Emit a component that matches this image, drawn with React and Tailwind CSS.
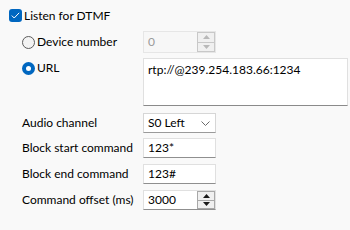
const Radio = ({ checked }) =>
    checked ? (
        <span className="w-[13px] h-[13px] rounded-full bg-[#0067c0] flex items-center justify-center shrink-0">
            <span className="w-[5px] h-[5px] rounded-full bg-white"></span>
        </span>
    ) : (
        <span className="w-[13px] h-[13px] rounded-full border border-[#5c5c5c] bg-[#f3f3f3] shrink-0"></span>
    );

const SpinButtons = ({ disabled }) => {
    const arrow = disabled ? '#b8b8b8' : '#1a1a1a';
    const border = disabled ? 'border-[#c8c8c8]' : 'border-[#a8a8a8]';
    return (
        <div className={`w-[18px] h-full flex flex-col border ${border} bg-[#f0f0f0]`}>
            <div className={`flex-1 flex items-center justify-center border-b ${border}`}>
                <svg width="7" height="4" viewBox="0 0 7 4"><path d="M3.5 0 L7 4 L0 4 Z" fill={arrow} /></svg>
            </div>
            <div className="flex-1 flex items-center justify-center">
                <svg width="7" height="4" viewBox="0 0 7 4"><path d="M0 0 L7 0 L3.5 4 Z" fill={arrow} /></svg>
            </div>
        </div>
    );
};

const Field = ({ children }) => (
    <div className="w-[73px] h-[20px] bg-white border border-[#e0e0e0] border-b-[#8f8f8f] flex items-center pl-[4px]">
        {children}
    </div>
);

const Label = ({ children }) => (
    <div className="w-[134px] shrink-0 pl-[13px] whitespace-nowrap">{children}</div>
);

export default function App() {
    return (
        <div
            className="w-[350px] h-[230px] bg-[#f9f9f9] text-[12px] leading-none text-black overflow-hidden pt-[9px] pl-[9px] whitespace-nowrap"
            style={{ fontFamily: '"Segoe UI", Lato, sans-serif' }}
        >
            {/* checkbox header */}
            <div className="flex items-center h-[13px] gap-[2px]">
                <span className="w-[13px] h-[13px] rounded-[3px] bg-[#0067c0] flex items-center justify-center">
                    <svg width="9" height="7" viewBox="0 0 9 7">
                        <path d="M0.8 3.6 L3.2 6 L8.2 0.8" fill="none" stroke="white" strokeWidth="1" />
                    </svg>
                </span>
                <span>Listen for DTMF</span>
            </div>

            <div className="pl-[13px] flex flex-col">
                {/* device number */}
                <div className="flex items-center h-[22px] mt-[9px]">
                    <div className="w-[121px] flex items-center gap-[2px]">
                        <Radio />
                        <span>Device number</span>
                    </div>
                    <div className="w-[73px] h-[22px] flex bg-[#f7f7f7] border border-[#e6e6e6]">
                        <div className="flex-1 flex items-center pl-[4px] text-[#9a9a9a]">0</div>
                        <SpinButtons disabled />
                    </div>
                </div>

                {/* url */}
                <div className="flex items-start mt-[5px]">
                    <div className="w-[121px] h-[20px] flex items-center gap-[2px]">
                        <Radio checked />
                        <span>URL</span>
                    </div>
                    <div className="w-[205px] h-[48px] bg-white border border-[#e0e0e0] border-b-[#8a8a8a] pl-[4px] pt-[5px]">
                        rtp://@239.254.183.66:1234
                    </div>
                </div>
            </div>

            <div className="flex flex-col">
                <div className="flex items-center h-[20px] mt-[7px]">
                    <Label>Audio channel</Label>
                    <div className="w-[73px] h-[20px] bg-white border border-[#d6d6d6] border-b-[#9a9a9a] flex items-center justify-between pl-[4px] pr-[5px]">
                        <span>S0 Left</span>
                        <svg width="9" height="5" viewBox="0 0 9 5">
                            <path d="M0.5 0.5 L4.5 4.5 L8.5 0.5" fill="none" stroke="#6b6b6b" strokeWidth="1" />
                        </svg>
                    </div>
                </div>
                <div className="flex items-center h-[20px] mt-[5px]">
                    <Label>Block start command</Label>
                    <Field>123*</Field>
                </div>
                <div className="flex items-center h-[20px] mt-[6px]">
                    <Label>Block end command</Label>
                    <Field>123#</Field>
                </div>
                <div className="flex items-center h-[20px] mt-[6px]">
                    <Label>Command offset (ms)</Label>
                    <div className="w-[73px] h-[20px] flex bg-white border border-[#e0e0e0] border-b-[#8f8f8f]">
                        <div className="flex-1 flex items-center pl-[4px]">3000</div>
                        <SpinButtons />
                    </div>
                </div>
            </div>
        </div>
    );
}
